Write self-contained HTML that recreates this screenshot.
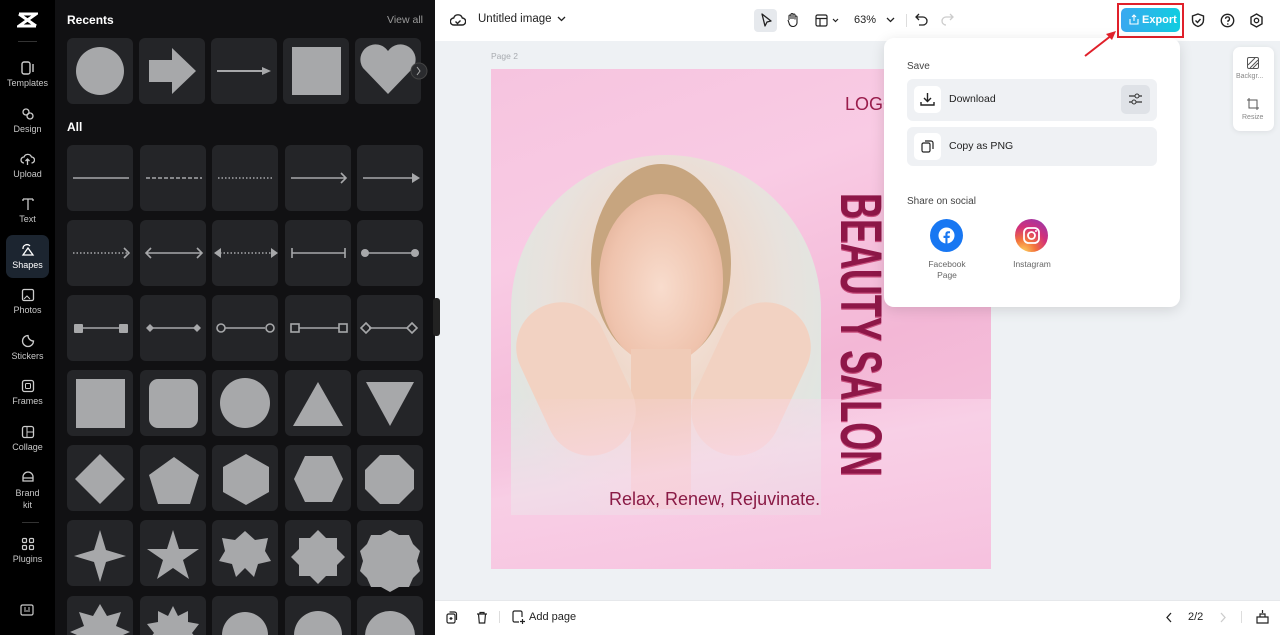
<!DOCTYPE html>
<html><head><meta charset="utf-8"><style>
*{box-sizing:border-box;margin:0;padding:0}
body{width:1280px;height:635px;overflow:hidden;font-family:"Liberation Sans",sans-serif;background:#eef1f4;position:relative}
.abs{position:absolute}
#side{left:0;top:0;width:55px;height:635px;background:#000}
.nav{position:absolute;left:0;width:55px;text-align:center;color:#c8c8c8;font-size:9px}
.nav svg{display:block;margin:0 auto 3px}
#panel{left:55px;top:0;width:380px;height:635px;background:#111113}
#top{left:435px;top:0;width:845px;height:41px;background:#fff}
#bot{left:435px;top:600px;width:845px;height:35px;background:#fff;border-top:1px solid #e6e8eb}
</style></head><body>
<div id="side" class="abs">
 <svg class="abs" style="left:17px;top:12px" width="21" height="16" viewBox="0 0 21 16"><path d="M2 2h17L2 14h17M2 2l17 12" stroke="#fff" stroke-width="3" fill="none"/></svg>
 <div class="abs" style="left:18px;top:41px;width:19px;height:1px;background:#333"></div>
 <div class="nav" style="top:61px"><svg width="14" height="14" viewBox="0 0 14 14"><rect x="1" y="1" width="8" height="12" rx="2" fill="none" stroke="#ccc" stroke-width="1.4"/><path d="M12 3v8" stroke="#ccc" stroke-width="1.4"/></svg>Templates</div>
 <div class="nav" style="top:107px"><svg width="14" height="14" viewBox="0 0 14 14"><circle cx="5" cy="5" r="3" fill="none" stroke="#ccc" stroke-width="1.3"/><circle cx="9" cy="9" r="3" fill="none" stroke="#ccc" stroke-width="1.3"/></svg>Design</div>
 <div class="nav" style="top:152px"><svg width="15" height="14" viewBox="0 0 15 14"><path d="M4 11a3 3 0 0 1 0-6 4 4 0 0 1 7.5 0 3 3 0 0 1 0 6M7.5 13V7M5.5 9l2-2 2 2" stroke="#ccc" stroke-width="1.3" fill="none"/></svg>Upload</div>
 <div class="nav" style="top:197px"><svg width="14" height="14" viewBox="0 0 14 14"><path d="M2 2h10M7 2v11M2 2v2M12 2v2" stroke="#ccc" stroke-width="1.3" fill="none"/></svg>Text</div>
 <div class="abs" style="left:6px;top:235px;width:43px;height:43px;background:#1c2530;border-radius:7px"></div>
 <div class="nav" style="top:243px;color:#fff"><svg width="14" height="14" viewBox="0 0 14 14"><path d="M2 6a4 4 0 0 1 7-3M7 5l5 7H2z" stroke="#fff" stroke-width="1.3" fill="none"/></svg>Shapes</div>
 <div class="nav" style="top:288px"><svg width="14" height="14" viewBox="0 0 14 14"><rect x="1.5" y="1.5" width="11" height="11" rx="1.5" fill="none" stroke="#ccc" stroke-width="1.3"/><path d="M3 11l3-3 3 3" stroke="#ccc" fill="none"/></svg>Photos</div>
 <div class="nav" style="top:334px"><svg width="14" height="14" viewBox="0 0 14 14"><path d="M7 1.5a5.5 5.5 0 1 0 5.5 5.5A5.5 5.5 0 0 1 7 1.5z" stroke="#ccc" stroke-width="1.3" fill="none"/></svg>Stickers</div>
 <div class="nav" style="top:379px"><svg width="14" height="14" viewBox="0 0 14 14"><rect x="1.5" y="1.5" width="11" height="11" rx="2" fill="none" stroke="#ccc" stroke-width="1.3"/><rect x="4.5" y="4.5" width="5" height="5" rx="1" fill="none" stroke="#ccc"/></svg>Frames</div>
 <div class="nav" style="top:425px"><svg width="14" height="14" viewBox="0 0 14 14"><rect x="1.5" y="1.5" width="11" height="11" rx="2" fill="none" stroke="#ccc" stroke-width="1.3"/><path d="M6 2v10M6 7h6" stroke="#ccc"/></svg>Collage</div>
 <div class="nav" style="top:470px;line-height:12px"><svg width="14" height="14" viewBox="0 0 14 14"><path d="M2 11V7a5 5 0 0 1 10 0v4zM2 8h10" stroke="#ccc" stroke-width="1.3" fill="none"/></svg>Brand<br>kit</div>
 <div class="abs" style="left:22px;top:522px;width:17px;height:1px;background:#333"></div>
 <div class="nav" style="top:537px"><svg width="14" height="14" viewBox="0 0 14 14"><g fill="none" stroke="#ccc" stroke-width="1.2"><rect x="1.5" y="1.5" width="4" height="4" rx="1"/><rect x="8.5" y="1.5" width="4" height="4" rx="1"/><rect x="1.5" y="8.5" width="4" height="4" rx="1"/><rect x="8.5" y="8.5" width="4" height="4" rx="1"/></g></svg>Plugins</div>
 <svg class="abs" style="left:20px;top:604px" width="14" height="12" viewBox="0 0 14 12"><rect x="1" y="1" width="12" height="10" rx="1.5" fill="none" stroke="#ccc" stroke-width="1.2"/><path d="M4 7h6M5 3v3M9 3v3" stroke="#ccc"/></svg>
</div>

<div id="panel" class="abs">
 <div class="abs" style="left:12px;top:13px;color:#fff;font-weight:bold;font-size:12px">Recents</div>
 <div class="abs" style="left:332px;top:14px;color:#9a9a9a;font-size:10.5px">View all</div>
 <div class="abs" style="left:12px;top:120px;color:#fff;font-weight:bold;font-size:12px">All</div>
</div>
<svg class="abs" style="left:0;top:0" width="435" height="635">
<g fill="#242528">
<rect x="67" y="38" width="66" height="66" rx="6"/><rect x="139" y="38" width="66" height="66" rx="6"/><rect x="211" y="38" width="66" height="66" rx="6"/><rect x="283" y="38" width="66" height="66" rx="6"/><rect x="355" y="38" width="66" height="66" rx="6"/>
<rect x="67" y="145" width="66" height="66" rx="6"/><rect x="140" y="145" width="66" height="66" rx="6"/><rect x="212" y="145" width="66" height="66" rx="6"/><rect x="285" y="145" width="66" height="66" rx="6"/><rect x="357" y="145" width="66" height="66" rx="6"/>
<rect x="67" y="220" width="66" height="66" rx="6"/><rect x="140" y="220" width="66" height="66" rx="6"/><rect x="212" y="220" width="66" height="66" rx="6"/><rect x="285" y="220" width="66" height="66" rx="6"/><rect x="357" y="220" width="66" height="66" rx="6"/>
<rect x="67" y="295" width="66" height="66" rx="6"/><rect x="140" y="295" width="66" height="66" rx="6"/><rect x="212" y="295" width="66" height="66" rx="6"/><rect x="285" y="295" width="66" height="66" rx="6"/><rect x="357" y="295" width="66" height="66" rx="6"/>
<rect x="67" y="370" width="66" height="66" rx="6"/><rect x="140" y="370" width="66" height="66" rx="6"/><rect x="212" y="370" width="66" height="66" rx="6"/><rect x="285" y="370" width="66" height="66" rx="6"/><rect x="357" y="370" width="66" height="66" rx="6"/>
<rect x="67" y="445" width="66" height="66" rx="6"/><rect x="140" y="445" width="66" height="66" rx="6"/><rect x="212" y="445" width="66" height="66" rx="6"/><rect x="285" y="445" width="66" height="66" rx="6"/><rect x="357" y="445" width="66" height="66" rx="6"/>
<rect x="67" y="520" width="66" height="66" rx="6"/><rect x="140" y="520" width="66" height="66" rx="6"/><rect x="212" y="520" width="66" height="66" rx="6"/><rect x="285" y="520" width="66" height="66" rx="6"/><rect x="357" y="520" width="66" height="66" rx="6"/>
<rect x="67" y="596" width="66" height="66" rx="6"/><rect x="140" y="596" width="66" height="66" rx="6"/><rect x="212" y="596" width="66" height="66" rx="6"/><rect x="285" y="596" width="66" height="66" rx="6"/><rect x="357" y="596" width="66" height="66" rx="6"/>
</g>
<g fill="#a7a8aa">
<circle cx="100" cy="71" r="24"/>
<path d="M149 60h23v-12l24 23-24 23v-12h-23z"/>
<path d="M217 70h45v2h-45z"/><path d="M262 67l9 4-9 4z"/>
<rect x="292" y="47" width="49" height="48"/>
<path d="M388 94l-25-26a13 13 0 0 1 25-17a13 13 0 0 1 25 17z"/>
</g>
<circle cx="419" cy="71" r="8" fill="#2a2b2e" stroke="#444"/><path d="M417 67l3 4-3 4" fill="none" stroke="#aaa"/>
<g stroke="#a7a8aa" fill="#a7a8aa" stroke-width="1.6">
<path d="M73 178h56"/>
<path d="M146 178h56" stroke-dasharray="4 2"/>
<path d="M218 178h56" stroke-dasharray="1.5 2"/>
<path d="M291 178h55M341 173l5 5-5 5" fill="none"/>
<path d="M363 178h50"/><path d="M412 173l8 5-8 5z" stroke="none"/>
<path d="M73 253h55" stroke-dasharray="1.5 2"/><path d="M124 248l5 5-5 5" fill="none"/>
<path d="M146 253h56M151 248l-5 5 5 5M197 248l5 5-5 5" fill="none"/>
<path d="M220 253h52" stroke-dasharray="1.5 2"/><path d="M221 248l-7 5 7 5zM271 248l7 5-7 5z" stroke="none"/>
<path d="M292 253h53M292 248v10M345 248v10"/>
<path d="M365 253h50"/><circle cx="365" cy="253" r="4" stroke="none"/><circle cx="415" cy="253" r="4" stroke="none"/>
<path d="M78 328h46"/><rect x="74" y="324" width="9" height="9" rx="1" stroke="none"/><rect x="119" y="324" width="9" height="9" rx="1" stroke="none"/>
<path d="M150 328h46"/><path d="M150 324l4 4-4 4-4-4zM197 324l4 4-4 4-4-4z" stroke="none"/>
<path d="M225 328h40" /><circle cx="221" cy="328" r="4" fill="none"/><circle cx="270" cy="328" r="4" fill="none"/>
<path d="M299 328h40"/><rect x="291" y="324" width="8" height="8" fill="none"/><rect x="339" y="324" width="8" height="8" fill="none"/>
<path d="M369 328h39"/><path d="M366 323l5 5-5 5-5-5zM412 323l5 5-5 5-5-5z" fill="none"/>
</g>
<g fill="#a7a8aa">
<rect x="76" y="379" width="49" height="49"/>
<rect x="149" y="379" width="49" height="49" rx="9"/>
<circle cx="245" cy="403" r="25"/>
<path d="M318 382l25 44h-50z"/>
<path d="M366 382h48l-24 44z"/>
<path d="M100 454l25 25-25 25-25-25z"/>
<path d="M174 457l25 18-9 29h-32l-9-29z"/>
<path d="M246 454l23 13v25l-23 13-23-13v-25z"/>
<path d="M305 456h27l11 23-11 23h-27l-11-23z"/>
<path d="M380 455h19l15 15v19l-15 15h-19l-15-15v-19z"/>
<path d="M100 530l6 20 20 6-20 6-6 20-6-20-20-6 20-6z"/>
<path d="M173 530l6 19h20l-16 11 6 19-16-11-16 11 6-19-16-11h20z"/>
<path d="M245 531l10 9 13-2-3 13 6 10-13 3-4 13-9-9-9 9-4-13-13-3 6-10-3-13 13 2z"/>
<path d="M318 530l8 8h11v11l8 8-8 8v11h-11l-8 8-8-8h-11v-11l-8-8 8-8v-11h11z"/>
<path d="M390 530l9 5 10 0 4 9 7 7-3 10 3 10-7 7-4 9-10 0-9 5-9-5-10 0-4-9-7-7 3-10-3-10 7-7 4-9 10 0z"/>
<path d="M100 604l7 12 14-4-5 14 14 6-14 6 5 14-14-4-7 12-7-12-14 4 5-14-14-6 14-6-5-14 14 4z"/>
<path d="M173 606l5 10 10-5 0 11 11 2-7 9 7 9-11 2 0 11-10-5-5 10-5-10-10 5 0-11-11-2 7-9-7-9 11-2 0-11 10 5z"/>
<circle cx="245" cy="635" r="23"/>
<circle cx="318" cy="635" r="24"/>
<circle cx="390" cy="636" r="25"/>
</g>
</svg>
<div class="abs" style="left:433px;top:298px;width:7px;height:38px;background:#222;border-radius:3px"></div>

<div id="top" class="abs"></div>
<svg class="abs" style="left:450px;top:13px" width="16" height="14" viewBox="0 0 16 14"><path d="M4 12a3.5 3.5 0 0 1-.3-7 4.5 4.5 0 0 1 8.6 0A3.5 3.5 0 0 1 12 12zM5.5 8.5l2 2 3-3" stroke="#222" stroke-width="1.4" fill="none"/></svg>
<div class="abs" style="left:478px;top:13px;font-size:11.5px;color:#222">Untitled image</div>
<svg class="abs" style="left:557px;top:16px" width="9" height="6"><path d="M1 1l3.5 3.5L8 1" stroke="#222" stroke-width="1.3" fill="none"/></svg>
<div class="abs" style="left:754px;top:9px;width:23px;height:23px;background:#e6e9ed;border-radius:4px"></div>
<svg class="abs" style="left:760px;top:13px" width="12" height="15"><path d="M2 1l9 7-4 1-2 4z" stroke="#222" stroke-width="1.3" fill="none" stroke-linejoin="round"/></svg>
<svg class="abs" style="left:786px;top:12px" width="13" height="15"><path d="M3 8V4a1 1 0 0 1 2 0v3V2.5a1 1 0 0 1 2 0V7V3a1 1 0 0 1 2 0v4.5V5a1 1 0 0 1 2 0v5a4 4 0 0 1-8 1L2 8" stroke="#222" stroke-width="1.1" fill="none"/></svg>
<svg class="abs" style="left:815px;top:14px" width="26" height="13"><rect x="1" y="1" width="11" height="11" rx="1.5" stroke="#222" stroke-width="1.2" fill="none"/><path d="M1 4.5h11M5 4.5V12M18 5l2.5 2.5L23 5" stroke="#222" stroke-width="1.2" fill="none"/></svg>
<div class="abs" style="left:854px;top:14px;font-size:11px;color:#222">63%</div>
<svg class="abs" style="left:886px;top:17px" width="9" height="6"><path d="M1 1l3.5 3.5L8 1" stroke="#222" stroke-width="1.3" fill="none"/></svg>
<div class="abs" style="left:906px;top:14px;width:1px;height:13px;background:#ddd"></div>
<svg class="abs" style="left:915px;top:13px" width="13" height="13"><path d="M4 1L1 4l3 3M1 4h7a4 4 0 0 1 0 8H4" stroke="#222" stroke-width="1.3" fill="none"/></svg>
<svg class="abs" style="left:941px;top:13px" width="13" height="13"><path d="M9 1l3 3-3 3M12 4H5a4 4 0 0 0 0 8" stroke="#ccc" stroke-width="1.3" fill="none"/></svg>
<div class="abs" style="left:1117px;top:3px;width:67px;height:35px;border:2px solid #e0202a"></div>
<div class="abs" style="left:1121px;top:8px;width:59px;height:24px;border-radius:5px;background:linear-gradient(90deg,#3aa8f0,#10cde0);color:#fff;font-weight:bold;font-size:11px;line-height:24px;padding-left:21px">Export</div>
<svg class="abs" style="left:1129px;top:14px" width="10" height="11"><path d="M5 7V1M3 3l2-2 2 2M1 5v5h8V5" stroke="#fff" stroke-width="1.1" fill="none"/></svg>
<svg class="abs" style="left:1191px;top:13px" width="14" height="15"><path d="M7 1l5.5 2v4c0 3.5-2.5 5.5-5.5 6.5C4 12.5 1.5 10.5 1.5 7V3zM4.5 7.5l2 2 3-3.5" stroke="#222" stroke-width="1.4" fill="none"/></svg>
<svg class="abs" style="left:1220px;top:13px" width="15" height="15"><circle cx="7.5" cy="7.5" r="6.2" stroke="#222" stroke-width="1.4" fill="none"/><path d="M5.5 5.8a2 2 0 1 1 2.5 2v1.2" stroke="#222" stroke-width="1.3" fill="none"/><circle cx="7.8" cy="11" r=".8" fill="#222"/></svg>
<svg class="abs" style="left:1249px;top:13px" width="15" height="15"><path d="M7.5 1l5.5 3.2v6.6L7.5 14 2 10.8V4.2z" stroke="#222" stroke-width="1.4" fill="none"/><circle cx="7.5" cy="7.5" r="2.2" stroke="#222" stroke-width="1.3" fill="none"/></svg>

<!-- canvas -->
<div class="abs" style="left:491px;top:51px;font-size:8.5px;color:#a8abb0">Page 2</div>
<div class="abs" style="left:491px;top:69px;width:500px;height:500px;background:linear-gradient(160deg,#f6c4df 0%,#f9cbe4 30%,#f3b7d6 60%,#f6c9e0 100%);overflow:hidden">
 <div class="abs" style="left:20px;top:86px;width:310px;height:360px;border-radius:155px 155px 0 0;background:radial-gradient(ellipse at 50% 40%,#f7e9e0 0%,#efd9cc 30%,#e8e2dd 55%,#dfe6e2 80%)"></div>
 <div class="abs" style="left:100px;top:95px;width:140px;height:200px;border-radius:50%;background:#c7a57f"></div>
 <div class="abs" style="left:108px;top:125px;width:124px;height:170px;border-radius:50% 50% 48% 48%;background:radial-gradient(ellipse at 50% 55%,#f8dccd 0%,#efc3ad 60%,#dcaa90 95%)"></div>
 <div class="abs" style="left:140px;top:280px;width:60px;height:160px;background:#f0cbb7"></div>
 <div class="abs" style="left:40px;top:230px;width:90px;height:160px;border-radius:45px;background:#f2d2c2;transform:rotate(-25deg)"></div>
 <div class="abs" style="left:215px;top:230px;width:90px;height:160px;border-radius:45px;background:#f2d2c2;transform:rotate(25deg)"></div>
 <div class="abs" style="left:0;top:330px;width:500px;height:170px;background:linear-gradient(170deg,rgba(255,255,255,0) 0%,rgba(250,215,235,.7) 40%,rgba(246,192,222,.9) 100%)"></div>
 <div class="abs" style="left:118px;top:420px;font-size:18px;color:#8a1a45">Relax, Renew, Rejuvinate.</div>
 <div class="abs" style="left:354px;top:25px;font-size:18px;color:#9a1d4c">LOGO</div>
 <div class="abs" style="left:398px;top:124px;white-space:nowrap;font-size:58px;line-height:58px;font-weight:bold;color:#8e1748;transform-origin:0 0;transform:rotate(90deg) scaleX(.62);text-shadow:2px 0 0 #c9507e">BEAUTY SALON</div>
</div>

<!-- right small panel -->
<div class="abs" style="left:1233px;top:47px;width:41px;height:84px;background:#fff;border-radius:7px;box-shadow:0 1px 6px rgba(0,0,0,.08)"></div>
<svg class="abs" style="left:1247px;top:57px" width="12" height="12"><rect x=".5" y=".5" width="11" height="11" rx="1.5" fill="none" stroke="#555"/><path d="M1 8l7-7M3 11l8-8M6 11l5-5" stroke="#555"/></svg>
<div class="abs" style="left:1236px;top:73px;font-size:7px;color:#888">Backgr...</div>
<svg class="abs" style="left:1247px;top:98px" width="12" height="12"><rect x="2" y="2" width="8" height="8" fill="none" stroke="#555"/><path d="M0 2h2M10 10h2M2 0v2M10 10v2" stroke="#555"/></svg>
<div class="abs" style="left:1242px;top:114px;font-size:7px;color:#888">Resize</div>

<!-- dropdown -->
<div class="abs" style="left:884px;top:38px;width:296px;height:269px;background:#fff;border-radius:10px;box-shadow:0 3px 14px rgba(0,0,0,.12)">
 <div class="abs" style="left:23px;top:23px;font-size:10px;color:#444">Save</div>
 <div class="abs" style="left:23px;top:41px;width:250px;height:42px;background:#eff1f4;border-radius:6px">
  <div class="abs" style="left:7px;top:7px;width:27px;height:27px;background:#fff;border-radius:5px"></div>
  <svg class="abs" style="left:13px;top:13px" width="15" height="14"><path d="M7.5 1v8M4 6l3.5 3.5L11 6M1 10v3h13v-3" stroke="#222" stroke-width="1.4" fill="none"/></svg>
  <div class="abs" style="left:42px;top:14px;font-size:10.5px;color:#222">Download</div>
  <div class="abs" style="left:214px;top:6px;width:29px;height:29px;background:#dfe2e7;border-radius:5px"></div>
  <svg class="abs" style="left:221px;top:13px" width="15" height="14"><path d="M1 4h13M1 10h13" stroke="#333" stroke-width="1.2"/><circle cx="9" cy="4" r="2" fill="#dfe2e7" stroke="#333"/><circle cx="6" cy="10" r="2" fill="#dfe2e7" stroke="#333"/></svg>
 </div>
 <div class="abs" style="left:23px;top:89px;width:250px;height:39px;background:#eff1f4;border-radius:6px">
  <div class="abs" style="left:7px;top:6px;width:27px;height:27px;background:#fff;border-radius:5px"></div>
  <svg class="abs" style="left:14px;top:12px" width="13" height="14"><rect x="1" y="4" width="8" height="9" rx="1.5" fill="none" stroke="#222" stroke-width="1.2"/><path d="M4 2h6a2 2 0 0 1 2 2v6" stroke="#222" stroke-width="1.2" fill="none"/></svg>
  <div class="abs" style="left:42px;top:13px;font-size:10.5px;color:#222">Copy as PNG</div>
 </div>
 <div class="abs" style="left:23px;top:158px;font-size:10px;color:#444">Share on social</div>
 <div class="abs" style="left:46px;top:181px;width:33px;height:33px;border-radius:50%;background:#1877f2"></div>
 <svg class="abs" style="left:54px;top:189px" width="17" height="17"><circle cx="8.5" cy="8.5" r="8" fill="#fff"/><path d="M9.5 17v-6h2l.4-2.3H9.5V7.4c0-.7.3-1.1 1.2-1.1h1.3v-2c-.4-.1-1-.1-1.7-.1-1.8 0-2.9 1-2.9 2.9v1.6H5.5V11h1.9v6z" fill="#1877f2"/></svg>
 <div class="abs" style="left:38px;top:221px;width:50px;text-align:center;font-size:8.5px;color:#666;line-height:10.5px">Facebook<br>Page</div>
 <div class="abs" style="left:131px;top:181px;width:33px;height:33px;border-radius:50%;background:radial-gradient(circle at 25% 100%,#fdd25e 0%,#f3743b 30%,#d2307a 60%,#8a3ab9 100%)"></div>
 <svg class="abs" style="left:138px;top:188px" width="19" height="19"><rect x="2" y="2" width="15" height="15" rx="4.5" fill="none" stroke="#fff" stroke-width="1.8"/><circle cx="9.5" cy="9.5" r="3.5" fill="none" stroke="#fff" stroke-width="1.8"/><circle cx="14" cy="5" r="1" fill="#fff"/></svg>
 <div class="abs" style="left:123px;top:221px;width:50px;text-align:center;font-size:8.5px;color:#666">Instagram</div>
</div>
<svg class="abs" style="left:1082px;top:29px" width="36" height="30"><path d="M3 27L30 6" stroke="#e0202a" stroke-width="2"/><path d="M34 2l-10 3 6 6z" fill="#e0202a"/></svg>

<div id="bot" class="abs"></div>
<svg class="abs" style="left:446px;top:611px" width="12" height="13"><rect x="1" y="3" width="8" height="9" rx="1.5" fill="none" stroke="#222" stroke-width="1.2"/><path d="M3.5 1h5a2 2 0 0 1 2 2v6M5 6v3M3.5 7.5h3" stroke="#222" stroke-width="1.2" fill="none"/></svg>
<svg class="abs" style="left:476px;top:611px" width="12" height="13"><path d="M1 3h10M4 3V1.5h4V3M2.5 3l.8 9h5.4l.8-9" stroke="#222" stroke-width="1.2" fill="none"/></svg>
<div class="abs" style="left:499px;top:611px;width:1px;height:12px;background:#ddd"></div>
<svg class="abs" style="left:512px;top:610px" width="14" height="15"><path d="M7 12H2.5a1.5 1.5 0 0 1-1.5-1.5v-8A1.5 1.5 0 0 1 2.5 1h6A1.5 1.5 0 0 1 10 2.5V7M10.5 9v5M8 11.5h5" stroke="#222" stroke-width="1.2" fill="none"/></svg>
<div class="abs" style="left:529px;top:611px;font-size:11px;color:#222">Add page</div>
<svg class="abs" style="left:1165px;top:612px" width="8" height="11"><path d="M6 1L2 5.5 6 10" stroke="#222" stroke-width="1.3" fill="none"/></svg>
<div class="abs" style="left:1188px;top:611px;font-size:11px;color:#222">2/2</div>
<svg class="abs" style="left:1219px;top:612px" width="8" height="11"><path d="M2 1l4 4.5L2 10" stroke="#ccc" stroke-width="1.3" fill="none"/></svg>
<div class="abs" style="left:1241px;top:611px;width:1px;height:12px;background:#ddd"></div>
<svg class="abs" style="left:1256px;top:609px" width="13" height="15"><path d="M1 8h11v6H1zM4 8V5h5v3M6.5 1v3" stroke="#222" stroke-width="1.2" fill="none"/></svg>
</body></html>
